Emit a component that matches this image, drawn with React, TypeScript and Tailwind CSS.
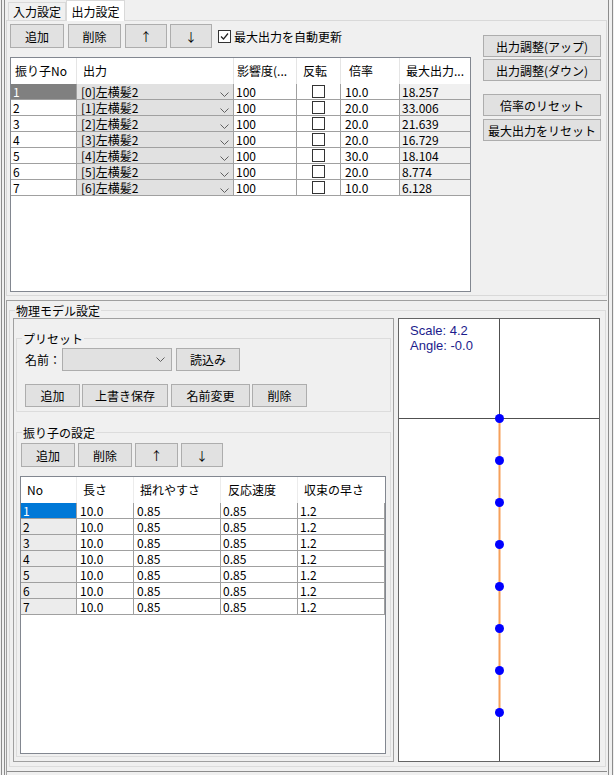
import React from "react";

const OUTPUTS = [
  { no: 1, name: "[0]左横髪2", eff: "100", rate: "10.0", max: "18.257" },
  { no: 2, name: "[1]左横髪2", eff: "100", rate: "20.0", max: "33.006" },
  { no: 3, name: "[2]左横髪2", eff: "100", rate: "20.0", max: "21.639" },
  { no: 4, name: "[3]左横髪2", eff: "100", rate: "20.0", max: "16.729" },
  { no: 5, name: "[4]左横髪2", eff: "100", rate: "30.0", max: "18.104" },
  { no: 6, name: "[5]左横髪2", eff: "100", rate: "20.0", max: "8.774" },
  { no: 7, name: "[6]左横髪2", eff: "100", rate: "10.0", max: "6.128" },
];

const PENDULUMS = [1, 2, 3, 4, 5, 6, 7];

function Btn({ label, className = "" }: { label: string; className?: string }) {
  return (
    <div className={`flex items-center justify-center bg-[#e1e1e1] border border-[#adadad] leading-[15px] ${className}`}>
      {label}
    </div>
  );
}

function Chevron() {
  return (
    <svg width="9" height="5" viewBox="0 0 9 5" className="shrink-0">
      <path d="M0.5 0.5 L4.5 4.5 L8.5 0.5" stroke="#606060" fill="none" />
    </svg>
  );
}

function GroupBox({ title, className = "", children }: { title: string; className?: string; children: React.ReactNode }) {
  return (
    <div className={`relative border border-[#dcdcdc] ${className}`}>
      <span className="absolute -top-[8px] left-[5px] bg-[#f0f0f0] px-[1px] leading-[15px]">{title}</span>
      {children}
    </div>
  );
}

function OutputGrid() {
  return (
    <div className="w-[461px] h-[235px] mt-[9px] bg-white border border-[#828790] flex flex-col">
      <div className="flex h-[26px] shrink-0">
        <div className="w-[66px] pl-[4px] flex items-center border-r border-[#e5e5e5]">振り子No</div>
        <div className="w-[157px] pl-[6px] flex items-center border-r border-[#e5e5e5]">出力</div>
        <div className="w-[63px] pl-[3px] flex items-center border-r border-[#e5e5e5]">影響度(...</div>
        <div className="w-[44px] pl-[6px] flex items-center border-r border-[#e5e5e5]">反転</div>
        <div className="w-[59px] pl-[8px] flex items-center border-r border-[#e5e5e5]">倍率</div>
        <div className="w-[70px] pl-[6px] flex items-center">最大出力...</div>
      </div>
      {OUTPUTS.map((r, i) => (
        <div key={r.no} className="flex h-[16px] shrink-0 border-b border-[#a0a0a0] leading-[15px]">
          <div className={`w-[66px] pl-[2px] flex items-center border-r border-[#a0a0a0] ${i === 0 ? "bg-[#808080] text-white" : ""}`}>
            {r.no}
          </div>
          <div className="w-[157px] pl-[4px] pr-[4px] flex items-center justify-between bg-[#e1e1e1] border-r border-[#a0a0a0]">
            <span>{r.name}</span>
            <span className="self-end pb-[2px]"><Chevron /></span>
          </div>
          <div className="w-[63px] pl-[2px] flex items-center border-r border-[#a0a0a0]">{r.eff}</div>
          <div className="w-[44px] flex items-center justify-center border-r border-[#a0a0a0]">
            <div className="w-[13px] h-[13px] border border-[#333333] bg-white" />
          </div>
          <div className="w-[59px] pl-[4px] flex items-center border-r border-[#a0a0a0]">{r.rate}</div>
          <div className="w-[70px] pl-[2px] flex items-center bg-[#f0f0f0]">{r.max}</div>
        </div>
      ))}
    </div>
  );
}

function PendulumGrid() {
  return (
    <div className="w-[366px] h-[278px] mt-[9px] bg-white border border-[#828790] flex flex-col">
      <div className="flex h-[26px] shrink-0">
        <div className="w-[56px] pl-[6px] flex items-center border-r border-[#ececec]">No</div>
        <div className="w-[57px] pl-[6px] flex items-center border-r border-[#ececec]">長さ</div>
        <div className="w-[87px] pl-[6px] flex items-center border-r border-[#ececec]">揺れやすさ</div>
        <div className="w-[77px] pl-[7px] flex items-center border-r border-[#ececec]">反応速度</div>
        <div className="w-[87px] pl-[6px] flex items-center">収束の早さ</div>
      </div>
      {PENDULUMS.map((n, i) => (
        <div key={n} className="flex h-[16px] shrink-0 border-b border-[#a0a0a0] leading-[15px]">
          <div className={`w-[56px] pl-[2px] flex items-center border-r border-[#a0a0a0] ${i === 0 ? "bg-[#0078d7] text-white" : "bg-[#ececec]"}`}>
            {n}
          </div>
          <div className="w-[57px] pl-[3px] flex items-center border-r border-[#a0a0a0]">10.0</div>
          <div className="w-[87px] pl-[3px] flex items-center border-r border-[#a0a0a0]">0.85</div>
          <div className="w-[77px] pl-[2px] flex items-center border-r border-[#a0a0a0]">0.85</div>
          <div className="w-[87px] pl-[2px] flex items-center border-r border-[#a0a0a0]">1.2</div>
        </div>
      ))}
    </div>
  );
}

function Preview() {
  const dots = [0, 1, 2, 3, 4, 5, 6, 7].map((k) => 99.5 + 42 * k);
  return (
    <div className="relative w-[202px] h-[444px] ml-[4px] bg-white border border-[#646464]">
      <svg width="200" height="442" className="absolute left-0 top-0">
        <line x1="100.5" y1="0" x2="100.5" y2="442" stroke="#505050" />
        <line x1="0" y1="99.5" x2="200" y2="99.5" stroke="#505050" />
        <line x1="100.5" y1="99.5" x2="100.5" y2="393.5" stroke="#f5a05a" strokeWidth="2" />
        {dots.map((y) => (
          <circle key={y} cx="100.5" cy={y} r="4.5" fill="#0000ff" />
        ))}
      </svg>
      <div className="absolute left-[11px] top-[4px] flex flex-col text-[#1c1c8c] text-[13px] font-['Liberation_Sans',sans-serif]">
        <div className="h-[15px] leading-[15px]">Scale: 4.2</div>
        <div className="h-[15px] leading-[15px]">Angle: -0.0</div>
      </div>
    </div>
  );
}

export default function App() {
  return (
    <div className="w-[614px] h-[775px] bg-[#f0f0f0] flex overflow-hidden text-[12px] text-black font-['Noto_Sans_CJK_JP','Noto_Sans',sans-serif]">
      {/* left window edge */}
      <div className="w-[6px] shrink-0 flex">
        <div className="w-[1px] ml-[1px] bg-[#8c8c8c]" />
        <div className="w-[1px] ml-[2px] bg-[#8c8c8c]" />
      </div>

      <div className="w-[601px] shrink-0 flex flex-col">
        {/* tabs */}
        <div className="h-[20px] flex items-end pl-[2px] leading-[15px]">
          <div className="w-[58px] h-[18px] flex items-center justify-center border border-b-0 border-[#d9d9d9] bg-[#f0f0f0]">入力設定</div>
          <div className="w-[59px] h-[21px] -mb-[1px] flex items-center justify-center border border-b-0 border-[#d9d9d9] bg-white relative z-10">出力設定</div>
        </div>

        {/* tab page */}
        <div className="h-[276px] border border-[#d9d9d9] bg-[#f0f0f0] flex items-start pl-[3px] pt-[3px]">
          <div className="w-[461px] flex flex-col">
            <div className="flex items-center h-[24px]">
              <Btn label="追加" className="w-[54px] h-[24px]" />
              <Btn label="削除" className="w-[53px] h-[24px] ml-[4px]" />
              <Btn label="↑" className="w-[42px] h-[24px] ml-[4px]" />
              <Btn label="↓" className="w-[42px] h-[24px] ml-[3px]" />
              <div className="w-[13px] h-[13px] ml-[6px] border border-[#333333] bg-white flex items-center justify-center">
                <svg width="11" height="11" viewBox="0 0 11 11">
                  <path d="M2 5.5 L4.5 8 L9 2.5" stroke="#222" strokeWidth="1.2" fill="none" />
                </svg>
              </div>
              <span className="ml-[3px] leading-[15px]">最大出力を自動更新</span>
            </div>
            <OutputGrid />
          </div>
          <div className="w-[118px] ml-[12px] pt-[11px] flex flex-col">
            <Btn label="出力調整(アップ)" className="h-[22px]" />
            <Btn label="出力調整(ダウン)" className="h-[22px] mt-[2px]" />
            <Btn label="倍率のリセット" className="h-[22px] mt-[13px]" />
            <Btn label="最大出力をリセット" className="h-[22px] mt-[3px]" />
          </div>
        </div>

        {/* lower panel */}
        <div className="mt-[4px] flex-1 border-t border-l border-[#a0a0a0] flex flex-col">
          <GroupBox title="物理モデル設定" className="mt-[9px] ml-[2px] w-[597px] pl-[3px] pt-[7px] pb-[4px] pr-[5px]">
            <div className="flex">
              {/* left panel */}
              <div className="w-[381px] h-[444px] border border-[#a0a0a0] px-[2px] pt-[19px] flex flex-col">
                <GroupBox title="プリセット" className="h-[74px] pt-[9px] pl-[8px]">
                  <div className="flex items-center h-[23px]">
                    <span className="w-[37px] leading-[15px]">名前：</span>
                    <div className="w-[110px] h-[23px] border border-[#adadad] bg-[#e1e1e1] flex items-center justify-end pr-[6px]">
                      <Chevron />
                    </div>
                    <Btn label="読込み" className="w-[64px] h-[23px] ml-[4px]" />
                  </div>
                  <div className="flex items-center mt-[13px]">
                    <Btn label="追加" className="w-[55px] h-[23px]" />
                    <Btn label="上書き保存" className="w-[86px] h-[23px] ml-[2px]" />
                    <Btn label="名前変更" className="w-[79px] h-[23px] ml-[3px]" />
                    <Btn label="削除" className="w-[55px] h-[23px] ml-[2px]" />
                  </div>
                </GroupBox>
                <GroupBox title="振り子の設定" className="h-[325px] mt-[20px] pt-[10px] pl-[3px]">
                  <div className="flex items-center pl-[1px]">
                    <Btn label="追加" className="w-[54px] h-[24px]" />
                    <Btn label="削除" className="w-[54px] h-[24px] ml-[3px]" />
                    <Btn label="↑" className="w-[43px] h-[24px] ml-[3px]" />
                    <Btn label="↓" className="w-[42px] h-[24px] ml-[3px]" />
                  </div>
                  <PendulumGrid />
                </GroupBox>
              </div>
              <Preview />
            </div>
          </GroupBox>
          <div className="mt-[4px] h-[1px] bg-[#8c8c8c]" />
        </div>
      </div>

      {/* right window edge */}
      <div className="w-[7px] shrink-0 flex">
        <div className="w-[1px] ml-[1px] bg-[#8c8c8c]" />
        <div className="w-[1px] ml-[3px] bg-[#8c8c8c]" />
      </div>
    </div>
  );
}
